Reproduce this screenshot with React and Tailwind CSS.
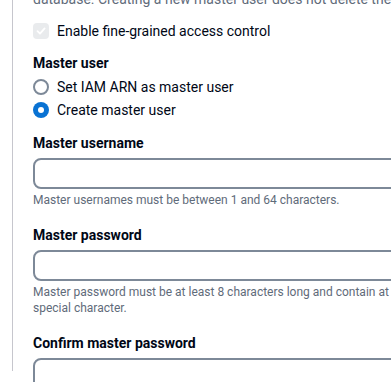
import React, { useState } from 'react';

function Radio({ checked, label, onClick }) {
  return (
    <label onClick={onClick} className="flex items-center gap-[8px] h-[20px] cursor-pointer">
      {checked ? (
        <span className="w-[16px] h-[16px] rounded-full bg-[#0972d3] flex items-center justify-center">
          <span className="w-[6px] h-[6px] rounded-full bg-white" />
        </span>
      ) : (
        <span className="w-[16px] h-[16px] rounded-full border-2 border-[#7d8998] bg-white" />
      )}
      <span className="text-[14px] leading-[20px] text-[#000716]">{label}</span>
    </label>
  );
}

function Field({ label, help, type = 'text' }) {
  return (
    <div className="flex flex-col">
      <div className="text-[14px] leading-[20px] font-bold text-[#000716]">{label}</div>
      <input
        type={type}
        className="mt-[5px] h-[31px] w-[400px] rounded-[8px] border-2 border-[#7d8998] bg-white px-3 text-[14px] outline-none"
      />
      {help && (
        <div className="mt-[3px] text-[12px] leading-[16px] text-[#5f6b7a] whitespace-nowrap">{help}</div>
      )}
    </div>
  );
}

export default function App() {
  const [master, setMaster] = useState('create');

  return (
    <div
      className="w-[391px] h-[382px] overflow-hidden bg-white"
      style={{ fontFamily: 'Roboto, "Noto Sans", sans-serif' }}
    >
      <div className="ml-[12px] h-full border-l border-[#c6c6cd] pl-[20px]">
        <div className="mt-[-11px] text-[14px] leading-[20px] text-[#5f6b7a] whitespace-nowrap">
          database. Creating a new master user does not delete the existing master user.
        </div>

        <label className="mt-[12px] flex items-center gap-[8px] h-[20px]">
          <span className="w-[16px] h-[16px] rounded-[4px] bg-[#e9ebed] flex items-center justify-center">
            <svg width="12" height="12" viewBox="0 0 12 12" fill="none">
              <path d="M2.5 6.2 L5 8.6 L9.6 3.4" stroke="#fff" strokeWidth="1.8" strokeLinecap="round" strokeLinejoin="round" />
            </svg>
          </span>
          <span className="text-[14px] leading-[20px] text-[#000716]">Enable fine-grained access control</span>
        </label>

        <div className="mt-[12px] text-[14px] leading-[20px] font-bold text-[#000716]">Master user</div>
        <div className="mt-[4px] flex flex-col gap-[3px]">
          <Radio checked={master === 'iam'} label="Set IAM ARN as master user" onClick={() => setMaster('iam')} />
          <Radio checked={master === 'create'} label="Create master user" onClick={() => setMaster('create')} />
        </div>

        <div className="mt-[13px] flex flex-col gap-[17px]">
          <Field label="Master username" help="Master usernames must be between 1 and 64 characters." />
          <Field
            label="Master password"
            type="password"
            help={
              <>
                Master password must be at least 8 characters long and contain at least one uppercase letter, one lowercase letter, one number, and one
                <br />
                special character.
              </>
            }
          />
          <Field label="Confirm master password" type="password" />
        </div>
      </div>
    </div>
  );
}
